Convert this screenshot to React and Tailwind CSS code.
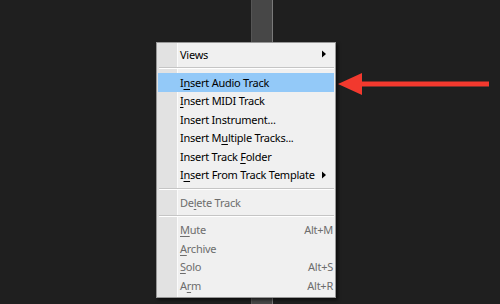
import React from "react";

function Arrow() {
  return (
    <svg width="8" height="8" viewBox="0 0 8 8" className="block">
      <path d="M2 0.5 L6 4 L2 7.5 Z" fill="#000" />
    </svg>
  );
}

function U({ children }) {
  return <span className="underline underline-offset-2 decoration-1">{children}</span>;
}

function Row({ children, shortcut, sub, disabled, active }) {
  return (
    <div
      className={
        "h-[18.5px] mx-[1px] flex items-center pl-[22px] pr-[1px] " +
        (active ? "bg-[#93c9f8] " : "") +
        (disabled ? "text-[#6d6d6d]" : "text-[#000]")
      }
    >
      <span className="flex-1 whitespace-nowrap">{children}</span>
      {shortcut && <span className="whitespace-nowrap">{shortcut}</span>}
      {sub && (
        <span className="mr-[5px]">
          <Arrow />
        </span>
      )}
    </div>
  );
}

function Sep({ h }) {
  return (
    <div className={"flex flex-col justify-center ml-[2px] mr-[1px] " + h}>
      <div className="h-px bg-[#c5c5c5]" />
      <div className="h-px bg-[#ffffff]" />
    </div>
  );
}

export default function App() {
  return (
    <div className="relative w-[500px] h-[304px] overflow-hidden bg-[#1f1f1f]">
      <div className="flex h-full">
        <div className="w-[251px] bg-[#1f1f1f]" />
        <div className="w-[21px] bg-[#474747] border-l border-[#555555]" />
        <div className="w-px bg-[#7a7a7a]" />
        <div className="flex-1 bg-[#1f1f1f]" />
      </div>

      <div
        className="absolute left-[156px] top-[42px] w-[180px] border border-[#979797] py-[2px] shadow-[2px_2px_3px_rgba(0,0,0,0.6)] bg-[linear-gradient(to_right,#e2e2e2_0,#e2e2e2_20px,#fbfbfb_20px,#fbfbfb_21px,#f0f0f0_21px)] text-[11px] tracking-[-0.25px] leading-none"
        style={{ fontFamily: '"Noto Sans", "Open Sans", sans-serif' }}
      >
        <Row sub>Views</Row>
        <Sep h="h-[9.5px]" />
        <Row active>
          I<U>n</U>sert Audio Track
        </Row>
        <Row>
          <U>I</U>nsert MIDI Track
        </Row>
        <Row>Insert Instrument...</Row>
        <Row>
          Insert M<U>u</U>ltiple Tracks...
        </Row>
        <Row>
          Insert Track <U>F</U>older
        </Row>
        <Row sub>
          I<U>n</U>sert From Track Template
        </Row>
        <Sep h="h-[9px]" />
        <Row disabled>
          De<U>l</U>ete Track
        </Row>
        <Sep h="h-[9px]" />
        <Row disabled shortcut="Alt+M">
          <U>M</U>ute
        </Row>
        <Row disabled>
          <U>A</U>rchive
        </Row>
        <Row disabled shortcut="Alt+S">
          <U>S</U>olo
        </Row>
        <Row disabled shortcut="Alt+R">
          A<U>r</U>m
        </Row>
      </div>

      <svg
        className="absolute left-[336px] top-[72px]"
        width="160"
        height="28"
        viewBox="0 0 160 28"
      >
        <g transform="translate(1,1)">
          <path
            d="M2 12 L26 1 L26 9.5 L153 9.5 L153 14.5 L26 14.5 L26 23 Z"
            fill="#0b2a2a"
            opacity="0.6"
          />
        </g>
        <path
          d="M2 12 L26 1 L26 9.5 L153 9.5 L153 14.5 L26 14.5 L26 23 Z"
          fill="#f2392e"
        />
      </svg>
    </div>
  );
}
